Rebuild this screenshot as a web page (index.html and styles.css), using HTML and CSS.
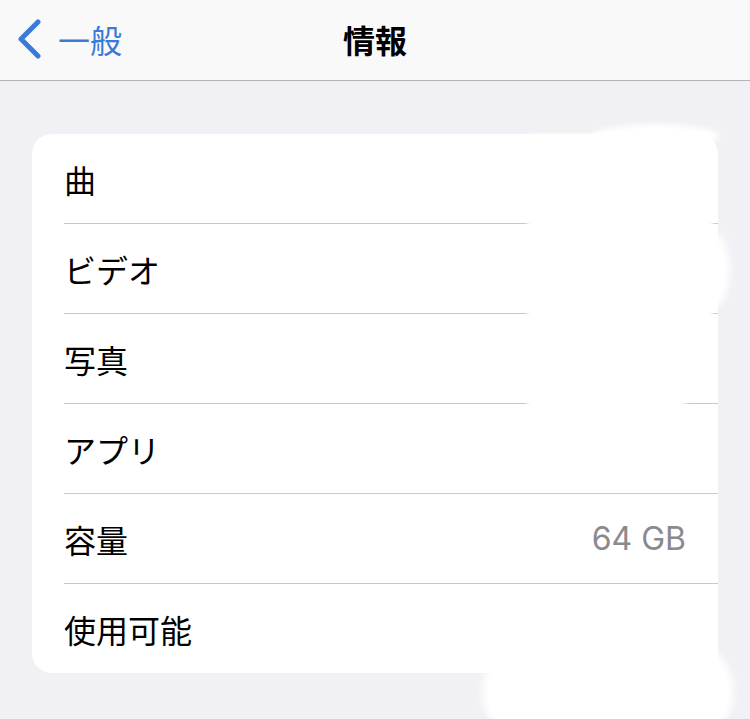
FILE: index.html
```html
<!DOCTYPE html>
<html lang="ja">
<head>
  <meta charset="UTF-8" />
  <title>情報</title>
  <link rel="stylesheet" href="styles.css">
</head>
<body>
  <div class="page">
    <header class="navbar">
      <a class="back" href="#">
        <svg class="chevron" width="26" height="40" viewBox="0 0 26 40">
          <polyline points="22,3 5,20 22,37" fill="none" stroke="#3a7ad8" stroke-width="5" stroke-linecap="round" stroke-linejoin="round" />
        </svg>
        <span>一般</span>
      </a>
      <h1 class="title">情報</h1>
      <div></div>
    </header>

    <main class="content">
      <ul class="group">
        <li class="row"><span class="label">曲</span><span class="value"></span></li>
        <li class="row"><span class="label">ビデオ</span><span class="value"></span></li>
        <li class="row"><span class="label">写真</span><span class="value"></span></li>
        <li class="row"><span class="label">アプリ</span><span class="value"></span></li>
        <li class="row"><span class="label">容量</span><span class="value">64 GB</span></li>
        <li class="row"><span class="label">使用可能</span><span class="value"></span></li>
      </ul>
    </main>

    <!-- painted-over areas of the original screenshot -->
    <div class="smudge smudge-top"></div>
    <div class="smudge smudge-cap"></div>
    <div class="smudge smudge-side"></div>
    <div class="smudge smudge-bottom"></div>
  </div>
</body>
</html>
```

FILE: styles.css
```css
body {
  margin: 0;
  background: #f0f0f5;
  font-family: "Noto Sans CJK JP", "Noto Sans", sans-serif;
  color: #000;
}

.page {
  position: relative;
  height: 719px;
  overflow: hidden;
}

.navbar {
  height: 81px;
  box-sizing: border-box;
  background: #f9f9fa;
  border-bottom: 1px solid #b4b4b8;
  display: grid;
  grid-template-columns: 1fr auto 1fr;
  align-items: center;
  padding: 0 16px 2px;
}

.back {
  display: flex;
  align-items: center;
  gap: 16px;
  color: #3a7ad8;
  text-decoration: none;
  font-size: 32px;
  line-height: 1;
}

.chevron {
  display: block;
}

.title {
  margin: 0;
  font-size: 32px;
  font-weight: 700;
  line-height: 1;
}

.content {
  padding: 53px 32px 0;
}

.group {
  list-style: none;
  margin: 0;
  padding: 0;
  background: #fff;
  border-radius: 20px;
  overflow: hidden;
}

.row {
  height: 89px;
  margin-left: 32px;
  padding-right: 32px;
  display: flex;
  align-items: center;
  justify-content: space-between;
  font-size: 32px;
  border-bottom: 1px solid #c8c8cc;
}

.row:last-child {
  border-bottom: none;
}

.value {
  color: #8a8a8e;
  font-family: Inter, "Noto Sans", sans-serif;
  font-size: 32px;
}

.smudge {
  position: absolute;
  background: #fff;
  filter: blur(2px);
}

.smudge-top {
  left: 527px;
  top: 134px;
  width: 186px;
  height: 276px;
  border-radius: 4px 30px 40px 6px / 4px 60px 120px 6px;
}

.smudge-cap {
  left: 592px;
  top: 124px;
  width: 128px;
  height: 24px;
  border-radius: 50%;
  filter: blur(3px);
}

.smudge-side {
  left: 696px;
  top: 232px;
  width: 34px;
  height: 76px;
  border-radius: 50%;
  filter: blur(4px);
}

.smudge-bottom {
  left: 482px;
  top: 612px;
  width: 252px;
  height: 160px;
  border-radius: 50%;
  filter: blur(4px);
}
```
